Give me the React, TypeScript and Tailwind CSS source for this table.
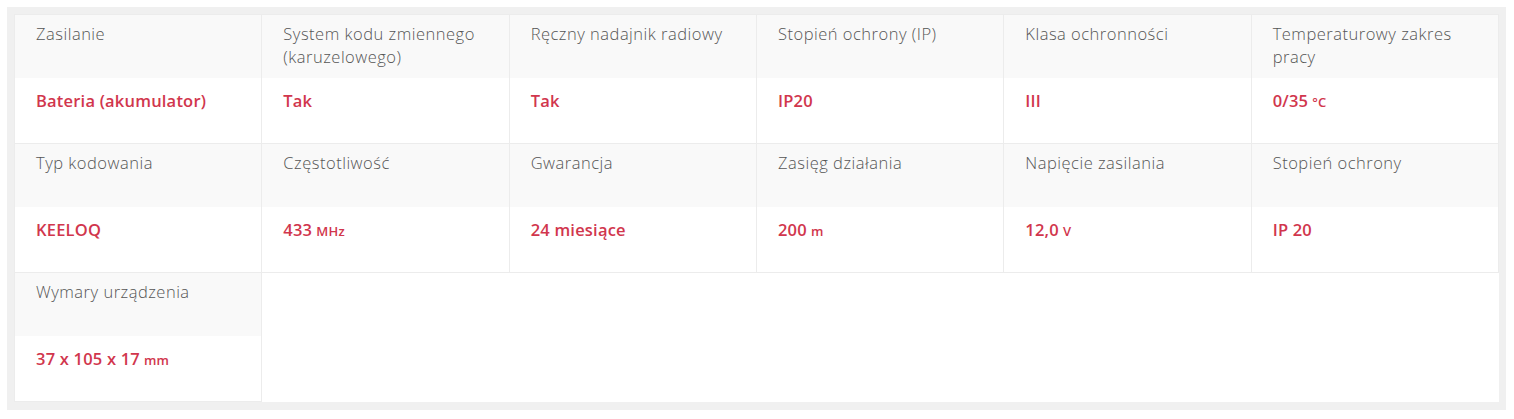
const specs: { label: string; value: string; unit?: string }[] = [
  { label: "Zasilanie", value: "Bateria (akumulator)" },
  { label: "System kodu zmiennego (karuzelowego)", value: "Tak" },
  { label: "Ręczny nadajnik radiowy", value: "Tak" },
  { label: "Stopień ochrony (IP)", value: "IP20" },
  { label: "Klasa ochronności", value: "III" },
  { label: "Temperaturowy zakres pracy", value: "0/35", unit: "°C" },
  { label: "Typ kodowania", value: "KEELOQ" },
  { label: "Częstotliwość", value: "433", unit: "MHz" },
  { label: "Gwarancja", value: "24 miesiące" },
  { label: "Zasięg działania", value: "200", unit: "m" },
  { label: "Napięcie zasilania", value: "12,0", unit: "V" },
  { label: "Stopień ochrony", value: "IP 20" },
  { label: "Wymary urządzenia", value: "37 x 105 x 17", unit: "mm" },
];

function SpecCell({ label, value, unit }: { label: string; value: string; unit?: string }) {
  return (
    <div className="flex flex-col border-r border-b border-[#ececec]">
      <div className="h-[63px] bg-[#f9f9f9] px-[21px] pt-[7px] text-[16.5px] leading-[23px] tracking-[0.5px] font-light text-[#555]">
        {label}
      </div>
      <div className="h-[65px] bg-white px-[21px] pt-[11px] text-[16.5px] leading-[23px] tracking-[0.2px] font-semibold text-[#d1364d]">
        {value}
        {unit && <span className="ml-1 text-[13px]">{unit}</span>}
      </div>
    </div>
  );
}

export default function App() {
  return (
    <div className="min-h-screen bg-white pt-[7px] pl-[7px] pr-[8px] font-['Open_Sans',sans-serif]">
      <div className="bg-[#f0f0f0] p-[7px] pb-[8px]">
        <div className="grid grid-cols-6 bg-white border-t border-l border-[#ececec]">
          {specs.map((s) => (
            <SpecCell key={s.label} {...s} />
          ))}
        </div>
      </div>
    </div>
  );
}
